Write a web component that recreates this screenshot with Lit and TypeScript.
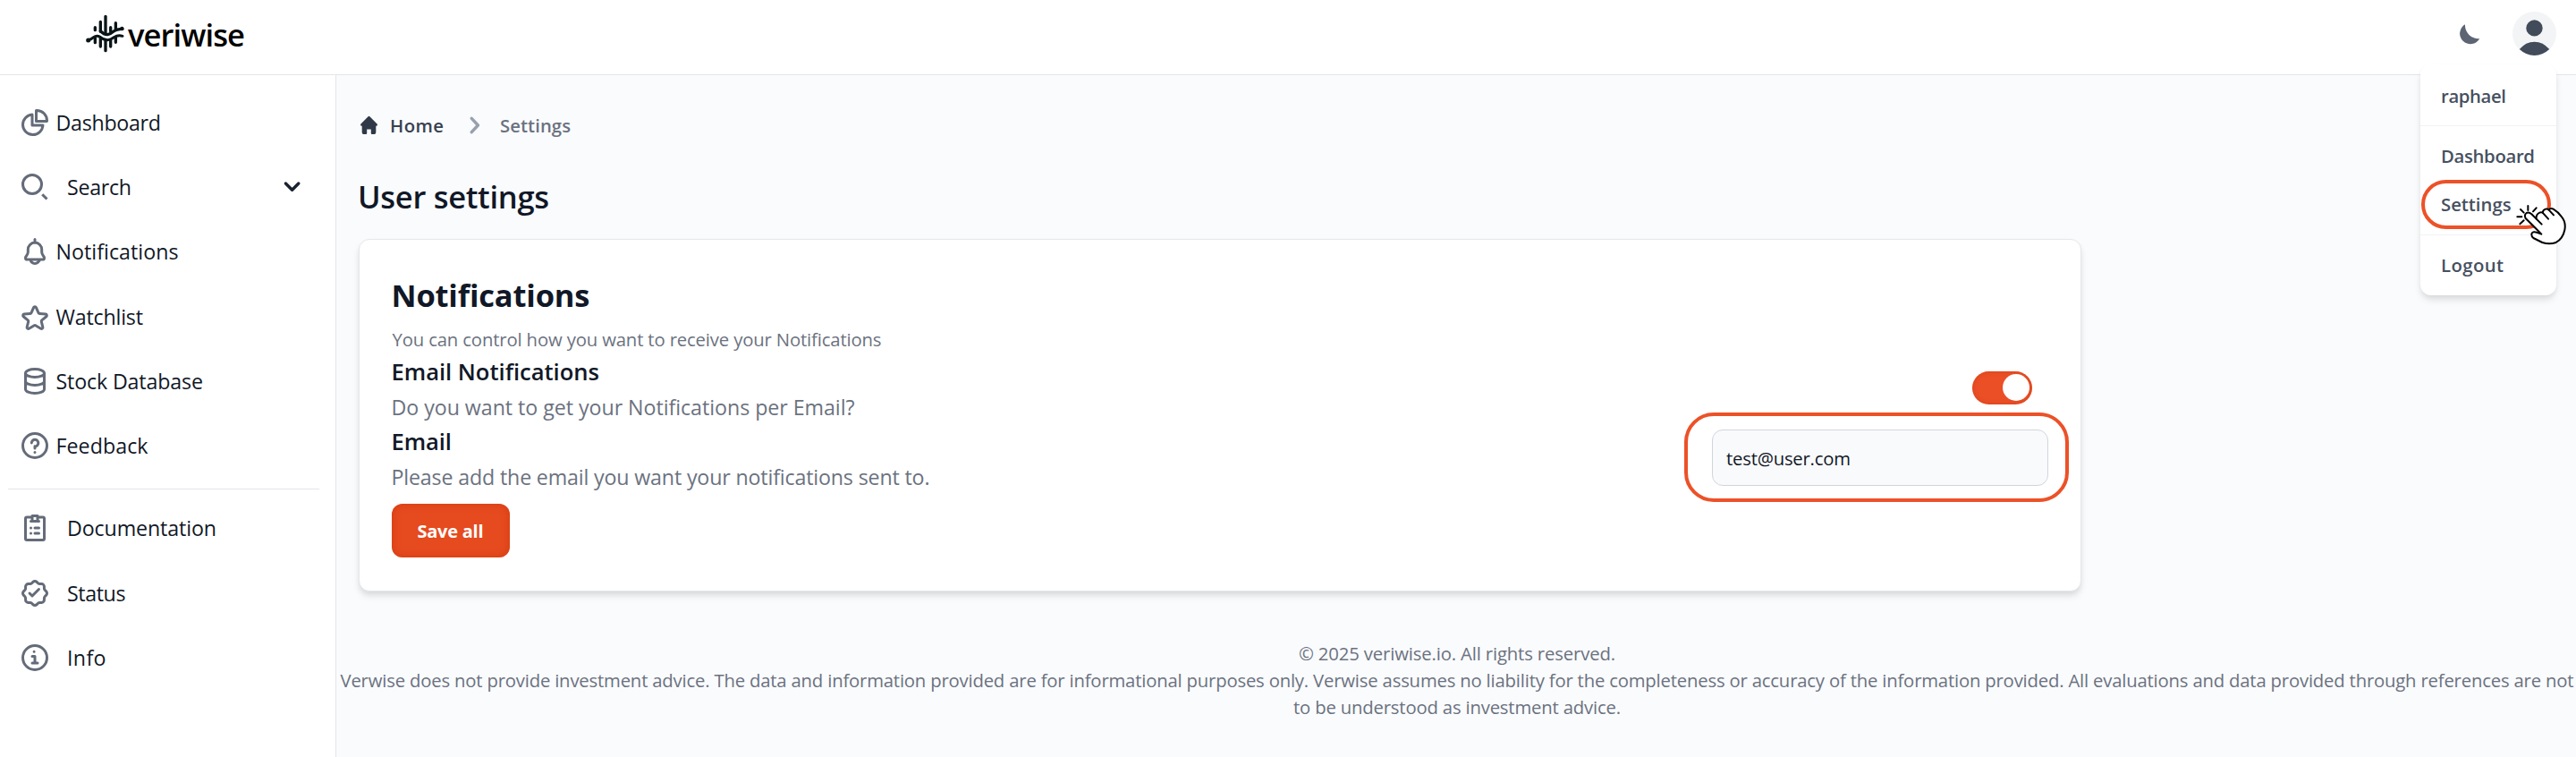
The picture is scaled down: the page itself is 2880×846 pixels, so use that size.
import { LitElement, html, css, svg } from "lit";
import { customElement, property } from "lit/decorators.js";

/** A single line of text whose tracking is tuned so that it spans a given advance width. */
@customElement("ui-text")
export class UiText extends LitElement {
  @property({ type: Number }) width = 0;
  @property() text = "";

  static styles = css`
    :host { display: block; white-space: pre; }
    .line { display: inline-block; }
  `;

  render() {
    return html`<span class="line">${this.text}</span>`;
  }

  updated() {
    const line = this.renderRoot.querySelector(".line") as HTMLElement;
    line.style.letterSpacing = "0px";
    const natural = line.getBoundingClientRect().width;
    const count = this.text.length;
    if (this.width && count > 1) {
      const gap = (this.width - natural) / (count - 1);
      line.style.letterSpacing = `${gap}px`;
      line.style.marginRight = `${-gap}px`;
    }
  }
}

const ICONS: Record<string, string> = {
  pie: "M10 6.025A7.5 7.5 0 1 0 17.975 14H10V6.025ZM13.5 3c-.169 0-.334.014-.5.025V11h7.975c.011-.166.025-.331.025-.5A7.5 7.5 0 0 0 13.5 3Z",
  search: "m21 21-3.5-3.5M17 10a7 7 0 1 1-14 0 7 7 0 0 1 14 0Z",
  bell: "M12 5.365V3m0 2.365a5.338 5.338 0 0 1 5.133 5.368v1.8c0 2.386 1.867 2.982 1.867 4.175 0 .593 0 1.292-.538 1.292H5.538C5 18 5 17.301 5 16.708c0-1.193 1.867-1.789 1.867-4.175v-1.8A5.338 5.338 0 0 1 12 5.365ZM8.733 18c.094.852.306 1.54.944 2.112a3.48 3.48 0 0 0 4.646 0c.638-.572 1.236-1.26 1.33-2.112h-6.92Z",
  star: "M11.083 5.104c.35-.8 1.485-.8 1.834 0l1.752 4.022a1 1 0 0 0 .84.597l4.463.342c.9.069 1.255 1.2.556 1.771l-3.33 2.723a1 1 0 0 0-.337 1.016l1.03 4.119c.214.858-.71 1.552-1.474 1.106l-3.913-2.281a1 1 0 0 0-1.008 0L7.583 20.8c-.764.446-1.688-.248-1.474-1.106l1.03-4.119A1 1 0 0 0 6.8 14.56l-3.33-2.723c-.698-.571-.342-1.702.557-1.771l4.462-.342a1 1 0 0 0 .84-.597l1.753-4.022Z",
  database: "M19 6c0 1.657-3.134 3-7 3S5 7.657 5 6m14 0c0-1.657-3.134-3-7-3S5 4.343 5 6m14 0v6M5 6v6m0 0c0 1.657 3.134 3 7 3s7-1.343 7-3M5 12v6c0 1.657 3.134 3 7 3s7-1.343 7-3v-6",
  question: "M9.529 9.988a2.502 2.502 0 1 1 5 .191A2.441 2.441 0 0 1 12 12.582V14m-.01 3.008H12M21 12a9 9 0 1 1-18 0 9 9 0 0 1 18 0Z",
  clipboard: "M15 4h3a1 1 0 0 1 1 1v15a1 1 0 0 1-1 1H6a1 1 0 0 1-1-1V5a1 1 0 0 1 1-1h3m0 3h6m-3 5h3m-6 0h.01M12 16h3m-6 0h.01M10 3v4h4V3h-4Z",
  badge: "m8.032 12 1.984 1.984 4.96-4.96m4.55 5.272.893-.893a1.984 1.984 0 0 0 0-2.806l-.893-.893a1.984 1.984 0 0 1-.581-1.403V7.04a1.984 1.984 0 0 0-1.984-1.984h-1.262a1.983 1.983 0 0 1-1.403-.581l-.893-.893a1.984 1.984 0 0 0-2.806 0l-.893.893a1.984 1.984 0 0 1-1.403.581H7.04A1.984 1.984 0 0 0 5.055 7.04v1.262c0 .527-.209 1.031-.581 1.403l-.893.893a1.984 1.984 0 0 0 0 2.806l.893.893c.372.372.581.876.581 1.403v1.262a1.984 1.984 0 0 0 1.984 1.984h1.262c.527 0 1.031.209 1.403.581l.893.893a1.984 1.984 0 0 0 2.806 0l.893-.893a1.985 1.985 0 0 1 1.403-.581h1.262a1.984 1.984 0 0 0 1.984-1.984V15.7c0-.527.209-1.031.581-1.403Z",
  info: "M10 11h2v5m-2 0h4m-2.592-8.5h.01M21 12a9 9 0 1 1-18 0 9 9 0 0 1 18 0Z",
};

interface NavItem { icon: string; label: string; width: number; indent?: boolean; expandable?: boolean }

const MAIN_NAV: NavItem[] = [
  { icon: "pie", label: "Dashboard", width: 117.5 },
  { icon: "search", label: "Search", width: 72, indent: true, expandable: true },
  { icon: "bell", label: "Notifications", width: 137 },
  { icon: "star", label: "Watchlist", width: 97.5 },
  { icon: "database", label: "Stock Database", width: 164.5 },
  { icon: "question", label: "Feedback", width: 103 },
];

const EXTRA_NAV: NavItem[] = [
  { icon: "clipboard", label: "Documentation", width: 167, indent: true },
  { icon: "badge", label: "Status", width: 65.5, indent: true },
  { icon: "info", label: "Info", width: 43.5, indent: true },
];

@customElement("app-root")
export class AppRoot extends LitElement {
  static styles = css`
    :host {
      display: block;
      position: relative;
      height: 846px;
      overflow: hidden;
      background: #f9fafb;
      color: #111827;
      font-family: "Open Sans", "Noto Sans", sans-serif;
    }
    * { box-sizing: border-box; }
    svg { display: block; flex: none; }

    .page { display: flex; flex-direction: column; height: 846px; background: #fafbfd; }
    .topbar {
      display: flex; align-items: center; flex: none; height: 84px;
      padding: 0 22px 8px 95px; background: #fff; border-bottom: 1px solid #e2e5ea;
    }
    .brand { font-size: 34.5px; font-weight: 600; line-height: 48px; color: #000; margin: 3px 0 0 3px; }
    .actions { display: flex; align-items: center; margin-left: auto; gap: 36px; }

    .body { display: flex; flex: 1; min-height: 0; }
    .sidebar { flex: none; width: 376px; background: #fff; border-right: 1px solid #e2e5ea; padding-top: 23px; }
    .nav { display: flex; flex-direction: column; gap: 12.2px; }
    .item { display: flex; align-items: center; height: 60px; padding: 0 37px 0 21px; font-size: 23.2px; line-height: 36px; }
    .label { margin-left: 5.5px; }
    .indent { margin-left: 18px; }
    .chevron { margin: 2px 0 0 auto; }
    .rule { height: 1px; margin: 18px 18px 13.5px 9px; background: #e2e5ea; }

    .main { flex: 1; min-width: 0; display: flex; flex-direction: column; }
    .crumbs { display: flex; align-items: center; height: 30px; margin: 41px 0 0 26px; font-size: 20.3px; font-weight: 600; color: #374151; }
    .home { margin-left: 13px; }
    .sep { margin: 0 22px 0 29px; }
    .here { color: #6b7280; }
    .heading { margin: 40px 0 0 24px; font-size: 34.5px; line-height: 50px; font-weight: 600; }
    .card {
      width: 1926px; height: 394px; margin: 22px 0 0 25px; padding: 38px 36px 0 35.5px;
      background: #fff; border: 1px solid #e5e7eb; border-radius: 12px;
      box-shadow: 0 6px 9px -1px rgba(0,0,0,.1), 0 3px 6px -1px rgba(0,0,0,.06);
    }
    .title { font-size: 34.5px; font-weight: 700; line-height: 48px; }
    .hint { font-size: 20.3px; line-height: 36px; margin-top: 7px; padding-left: 1px; color: #6b7280; }
    .row { display: flex; justify-content: space-between; align-items: center; }
    .name { font-size: 25.6px; font-weight: 600; line-height: 38px; }
    .desc { font-size: 23.2px; line-height: 39.5px; padding-top: 1px; margin-bottom: -1px; color: #6b7280; }
    .toggle {
      display: flex; justify-content: flex-end; align-items: center; width: 67px; height: 36.5px;
      padding: 3px; margin: 0 18px 5px 0; border-radius: 19px; background: #ea4f26;
      box-shadow: inset 0 0 5px rgba(190,50,10,.45);
    }
    .knob { width: 30px; height: 30px; border-radius: 50%; background: #fff; }
    .field {
      width: 376px; height: 63px; padding: 0 15px; margin-bottom: 3px; display: flex; align-items: center;
      border: 1px solid #d1d5db; border-radius: 12px; background: #f9fafc; font-size: 20.3px;
    }
    .save {
      display: flex; align-items: center; justify-content: center; width: 132px; height: 60px; margin-top: 11px;
      border-radius: 12px; background: #e64a1f; color: #fff; font-size: 20px; font-weight: 700;
      box-shadow: inset 0 0 8px rgba(195,50,5,.55);
    }
    .footer { display: flex; flex-direction: column; align-items: center; margin-top: 54px; padding-left: 2px; font-size: 20.3px; line-height: 30px; color: #6b7280; }

    .menu {
      position: absolute; left: 2705.5px; top: 72px; width: 152px; height: 258px;
      background: #fff; border-radius: 12px; box-shadow: 0 6px 9px -1px rgba(0,0,0,.1), 0 3px 6px -1px rgba(0,0,0,.06);
      font-size: 20.3px; font-weight: 600; color: #46505f;
    }
    .group { padding: 6px 0 6px 23.5px; line-height: 54.3px; border-bottom: 1px solid #f1f2f4; }
    .group:first-child { padding: 8px 0 5.7px 23.5px; }
    .group:last-child { border-bottom: 0; }
    .ring { position: absolute; border: 4.3px solid #ec5128; }
    .ring-menu { left: 2707px; top: 201px; width: 145px; height: 55px; border-radius: 28px; }
    .ring-field { left: 1882.5px; top: 461px; width: 430.5px; height: 99.5px; border-radius: 33px; }
    .pointer { position: absolute; left: 2811.7px; top: 226.7px; }
  `;

  private icon(name: string) {
    return html`<svg width="36" height="36" viewBox="0 0 24 24" fill="none" stroke="#646b79" stroke-width="2"
      stroke-linecap="${name === "search" ? "butt" : "round"}" stroke-linejoin="round">${svg`<path d=${ICONS[name]} />`}</svg>`;
  }

  private navItem(item: NavItem) {
    return html`<div class="item">
      ${this.icon(item.icon)}
      <ui-text class=${item.indent ? "indent" : "label"} .width=${item.width} .text=${item.label}></ui-text>
      ${item.expandable
        ? html`<svg class="chevron" width="24" height="18" viewBox="0 0 24 18"><path d="M5.4 4 12.6 11.2 19.8 4" fill="none" stroke="#1a2230" stroke-width="3.4" stroke-linecap="round" stroke-linejoin="round" /></svg>`
        : null}
    </div>`;
  }

  private line(cls: string, width: number, text: string) {
    return html`<ui-text class=${cls} .width=${width} .text=${text}></ui-text>`;
  }

  render() {
    return html`
      <div class="page">
        <header class="topbar">
          <svg width="45" height="45" viewBox="285 45 135 135" fill="none" stroke="#0a1517" stroke-width="10" stroke-linecap="round" stroke-linejoin="round">
            <path d="M319 92V101M337 73V106M354 55V112M371 92V106M388 77V100" />
            <path d="M337 104Q349 117 361 116Q371 114 380 106Q391 97 411 97" />
            <path d="M296 135Q306 132 314 125Q324 117 336 124Q347 134 361 134Q371 133 382 125Q396 116 411 121" stroke-width="9" />
            <circle cx="296" cy="135" r="4" stroke-width="7" />
            <circle cx="409" cy="96" r="3" stroke-width="7" />
            <path d="M319 127V143M337 128V156M354 136V170M371 135V156M388 126V142" />
          </svg>
          ${this.line("brand", 131, "veriwise")}
          <div class="actions">
            <svg width="24" height="24" viewBox="0 0 24 24"><path d="M7 1.2A15 15 0 0 0 23.2 17.2A11.8 11.8 0 1 1 7 1.2Z" fill="#5d6574" /></svg>
            <svg width="49" height="49" viewBox="0 0 48 48"><circle cx="24" cy="24" r="24" fill="#f3f4f6" /><circle cx="24" cy="18" r="9" fill="#414b5a" /><path d="M7.6 41.2Q14.5 33 24 33T40.4 41.2Q33 48 24 48T7.6 41.2Z" fill="#414b5a" /></svg>
          </div>
        </header>
        <div class="body">
          <aside class="sidebar">
            <nav class="nav">${MAIN_NAV.map((i) => this.navItem(i))}</nav>
            <div class="rule"></div>
            <nav class="nav">${EXTRA_NAV.map((i) => this.navItem(i))}</nav>
          </aside>
          <main class="main">
            <div class="crumbs">
              <svg width="21" height="22" viewBox="0 0 21 22"><path d="M9.6 1.2Q10.5.4 11.4 1.2L19.8 9.7Q20.6 11.5 18.8 11.8H18.3V19Q18.2 20.8 16.5 21H13.8Q12.8 21 12.8 20V15.4H8.2V20Q8.2 21 7.2 21H4.5Q2.8 20.8 2.7 19V11.8H2.2Q.4 11.5 1.2 9.7Z" fill="#2f3948" /></svg>
              ${this.line("home", 60, "Home")}
              <svg class="sep" width="12" height="20" viewBox="0 0 12 20"><path d="M2.3 2.3 9.4 10 2.3 17.7" fill="none" stroke="#98a0ad" stroke-width="3.4" stroke-linecap="round" stroke-linejoin="round" /></svg>
              ${this.line("here", 79, "Settings")}
            </div>
            ${this.line("heading", 214, "User settings")}
            <section class="card">
              ${this.line("title", 222, "Notifications")}
              ${this.line("hint", 547, "You can control how you want to receive your Notifications")}
              <div class="row">
                <div>
                  ${this.line("name", 232.5, "Email Notifications")}
                  ${this.line("desc", 518, "Do you want to get your Notifications per Email?")}
                </div>
                <div class="toggle"><div class="knob"></div></div>
              </div>
              <div class="row">
                <div>
                  ${this.line("name", 67.5, "Email")}
                  ${this.line("desc", 602, "Please add the email you want your notifications sent to.")}
                </div>
                <div class="field">${this.line("value", 139, "test@user.com")}</div>
              </div>
              <div class="save">${this.line("caption", 74, "Save all")}</div>
            </section>
            <footer class="footer">
              ${this.line("note", 354, "© 2025 veriwise.io. All rights reserved.")}
              ${this.line("note", 2497, "Verwise does not provide investment advice. The data and information provided are for informational purposes only. Verwise assumes no liability for the completeness or accuracy of the information provided. All evaluations and data provided through references are not")}
              ${this.line("note", 366, "to be understood as investment advice.")}
            </footer>
          </main>
        </div>
      </div>

      <div class="menu">
        <div class="group">${this.line("entry", 73, "raphael")}</div>
        <div class="group">${this.line("entry", 105, "Dashboard")}${this.line("entry", 78.5, "Settings")}</div>
        <div class="group">${this.line("entry", 70, "Logout")}</div>
      </div>
      <div class="ring ring-menu"></div>
      <div class="ring ring-field"></div>
      <svg class="pointer" width="58.33" height="48.33" viewBox="395 680 175 145" fill="none" stroke="#000" stroke-width="6" stroke-linecap="round" stroke-linejoin="round">
        <path fill="#fff" d="M430 731Q424 719 433 713Q441 709 450 717L466 733Q464 718 477 712Q482 710 487 712Q488 703 497 700Q503 698 508 703Q513 695 523 700Q538 709 551 726Q566 744 561 770Q555 799 532 812Q510 820 486 812L456 797Q449 792 450 783Q453 775 461 777L470 779L483 784L467 768Z" />
        <path d="M466 733 484 751M487 712 506 733M508 703 524 720" />
        <path d="M402 726H417M413 701 424 712M438 689V704M466 696 455 708M411 750 424 738" />
      </svg>
    `;
  }
}
